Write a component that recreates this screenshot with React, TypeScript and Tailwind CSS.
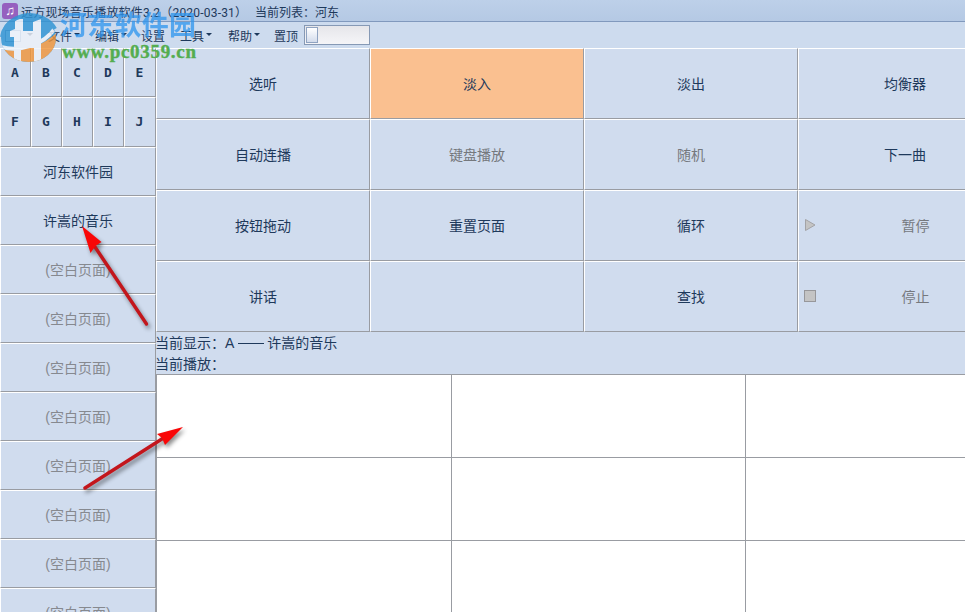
import React, { useState } from 'react';

const letters = ['A', 'B', 'C', 'D', 'E', 'F', 'G', 'H', 'I', 'J'];

const pages = ['河东软件园', '许嵩的音乐', '', '', '', '', '', '', '', ''];

interface Action {
  label: string;
  disabled?: boolean;
  icon?: 'play' | 'stop';
}

const actions: Action[] = [
  { label: '选听' },
  { label: '淡入' },
  { label: '淡出' },
  { label: '均衡器' },
  { label: '自动连播' },
  { label: '键盘播放', disabled: true },
  { label: '随机', disabled: true },
  { label: '下一曲' },
  { label: '按钮拖动' },
  { label: '重置页面' },
  { label: '循环' },
  { label: '暂停', disabled: true, icon: 'play' },
  { label: '讲话' },
  { label: '' },
  { label: '查找' },
  { label: '停止', disabled: true, icon: 'stop' },
];

const cell = 'border border-t-white border-l-white border-r-[#999ca2] border-b-[#999ca2]';

const Caret = () => (
  <svg width="6" height="3" viewBox="0 0 6 3" className="mb-1 ml-[2px]">
    <path d="M0 0h6L3 3z" fill="#1e395b" />
  </svg>
);

const MenuItem: React.FC<{ label: string; width: string; caret?: boolean }> = ({ label, width, caret = true }) => (
  <button className={`flex shrink-0 items-center ${width}`}>
    {label}
    {caret && <Caret />}
  </button>
);

const ActionIcon: React.FC<{ icon: 'play' | 'stop' }> = ({ icon }) => (
  <svg width="14" height="14" viewBox="0 0 14 14" className="mb-[2px] ml-[5px] shrink-0">
    {icon === 'play' ? (
      <path d="M1.5 1.500v11L11 7z" fill="#c4c4c4" stroke="#a3a3a6" />
    ) : (
      <rect x="0.5" y="1.5" width="11" height="11" fill="#c4c4c4" stroke="#97979a" />
    )}
  </svg>
);

const Watermark = () => (
  <div className="pointer-events-none absolute top-0 left-0 h-[66px] w-[210px]">
    <svg width="210" height="66" viewBox="0 0 210 66">
      <defs>
        <clipPath id="globe">
          <ellipse cx="28.500" cy="38" rx="27.500" ry="24" />
        </clipPath>
      </defs>
      <g opacity="0.82">
        <g clipPath="url(#globe)">
          <rect width="60" height="66" fill="#2f94d4" />
          <path d="M0 49c20 4 45-2 60-20v37H0z" fill="#f0953a" />
          <path d="M10 31l5-2V19h8v12h10v-9l8-3v43h-7V48H21v14h-7V37h-4z" fill="#eef3fa" />
          <path d="M1 47C20 52 44 45 56 27" fill="none" stroke="#eef3fa" strokeWidth="4" />
        </g>
        <path d="M2 37C4 22 23 9 43 18c6 3 10 7 12 11" fill="none" stroke="#2f94d4" strokeWidth="4" />
      </g>
      <text x="60" y="35" fontSize="27" fontWeight="700" fill="#2f96ee" opacity="0.76" fontFamily="'Noto Sans CJK SC', sans-serif" textLength="136">
        河东软件园
      </text>
      <text x="62" y="58" fontSize="19" fontWeight="700" fill="#54ad50" stroke="#54ad50" strokeWidth="0.4" fontFamily="'Liberation Serif', serif" textLength="134">
        www.pc0359.cn
      </text>
    </svg>
  </div>
);

const Arrows = () => (
  <svg width="200" height="300" viewBox="0 0 200 300" className="pointer-events-none absolute top-[215px] left-0 drop-shadow-[2px_3px_2px_rgba(0,0,0,0.45)]">
    <path d="M146.5 109L95 32" stroke="#c3161c" strokeWidth="3.4" strokeLinecap="round" />
    <path d="M82 11l19.5 16-6 4-5 7z" fill="#f90606" />
    <path d="M85 273l80-51" stroke="#c3161c" strokeWidth="3.4" strokeLinecap="round" />
    <path d="M183 212l-18 18-3-7-5-4z" fill="#f90606" />
  </svg>
);

const App: React.FC = () => {
  const [active, setActive] = useState('淡入');

  return (
    <div className="relative flex h-[612px] w-[965px] flex-col overflow-hidden bg-[#d0dcee] font-['Liberation_Sans','Noto_Sans_CJK_SC',sans-serif] text-[#1e395b]">
      <header className="flex h-[22px] shrink-0 items-center border-b border-[#8199bd] bg-linear-to-b from-[#bdd0e9] to-[#b5c9e4] pt-1 text-xs whitespace-pre">
        <div className="mb-1 ml-[2px] flex size-4 items-center justify-center rounded-[3px] bg-[#9560bf] text-[13px] text-white">♫</div>
        <span className="ml-[3px] w-[234px] font-['Roboto','Noto_Sans_CJK_SC',sans-serif] tracking-[0.2px]">远方现场音乐播放软件3.2（2020-03-31）</span>
        <span>当前列表：河东</span>
      </header>

      <nav className="flex h-[26px] shrink-0 items-center bg-[#cddbee] pl-[5px] text-xs">
        <div className="flex w-[43px] items-center gap-1 pt-[2px]">
          <span className="h-3 w-4 border border-[#7896bd] bg-[#dfe8f5]" />
          <Caret />
        </div>
        <div className="flex pt-[3px]">
          <MenuItem label="文件" width="w-[47px]" />
          <MenuItem label="编辑" width="w-[46px]" />
          <MenuItem label="设置" width="w-[39px]" caret={false} />
          <MenuItem label="工具" width="w-[48px]" />
          <MenuItem label="帮助" width="w-[46px]" />
          <MenuItem label="置顶" width="w-[30px]" caret={false} />
        </div>
        <div className="h-5 w-[66px] border border-[#8699b5] bg-linear-to-b from-[#e6e6ea] to-[#f5f5f8] p-px">
          <div className="h-4 w-3 border border-[#8fa3c1] bg-linear-to-b from-white to-[#d3dcec]" />
        </div>
      </nav>

      <div className="flex min-h-0 flex-1">
        <aside className="w-[156px] shrink-0 overflow-hidden">
          <div className="grid grid-cols-[31px_31px_31px_31px_32px] grid-rows-[49px_50px]">
            {letters.map((letter) => (
              <button key={letter} className={`${cell} pr-px font-['DejaVu_Sans_Mono',monospace] text-[13px] font-bold`}>
                {letter}
              </button>
            ))}
          </div>
          {pages.map((page, i) => (
            <button key={i} className={`${cell} block h-[49px] w-full text-sm ${page ? '' : 'text-[#86898f]'}`}>
              {page || '(空白页面)'}
            </button>
          ))}
        </aside>

        <main className="flex min-w-0 flex-1 flex-col overflow-hidden">
          <div className="grid shrink-0 grid-cols-[214px_214px_214px_214px] grid-rows-[71px_71px_71px_71px]">
            {actions.map((action, i) => (
              <button
                key={i}
                onClick={() => setActive(action.label)}
                className={`${cell} flex items-center text-sm ${action.disabled ? 'text-[#75787d]' : ''} ${
                  action.label === active ? 'bg-[#fac090]' : ''
                }`}
              >
                {action.icon && <ActionIcon icon={action.icon} />}
                <span className={`flex-1 text-center ${action.icon ? 'pl-[2px]' : ''}`}>{action.label}</span>
              </button>
            ))}
          </div>

          <div className="-ml-px h-[42px] shrink-0 pt-px text-sm leading-[21px]">
            <p className="flex items-center gap-[3px]">
              当前显示：A <span className="ml-px h-px w-[26px] bg-[#1e395b]" /> 许嵩的音乐
            </p>
            <p>当前播放：</p>
          </div>

          <div className="grid shrink-0 grid-cols-[295px_294px_294px] grid-rows-[83px_83px_83px] border-t border-l border-[#999ca2] bg-white">
            {Array.from({ length: 9 }, (_, i) => (
              <div key={i} className="border-r border-b border-[#999ca2]" />
            ))}
          </div>
        </main>
      </div>

      <Watermark />
      <Arrows />
    </div>
  );
};

export default App;
